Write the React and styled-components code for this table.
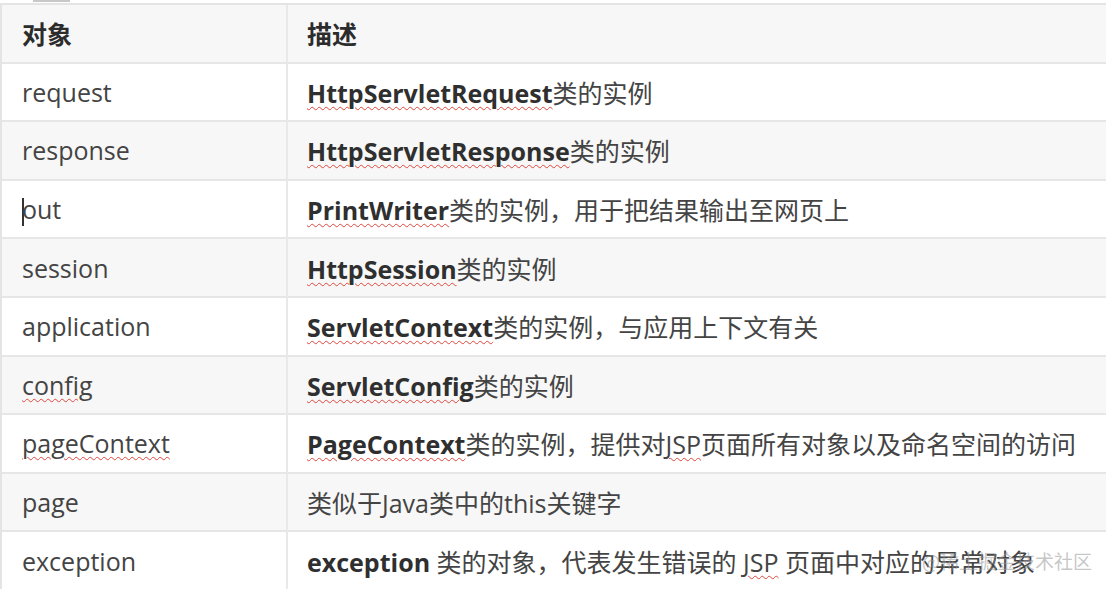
import React from "react";
import styled, { createGlobalStyle } from "styled-components";

const GlobalStyle = createGlobalStyle`
  html, body {
    margin: 0;
    padding: 0;
    background: #ffffff;
  }
  body {
    font-family: "Open Sans", "Noto Sans CJK SC", sans-serif;
    color: #3b3b3b;
  }
`;

const Page = styled.div`
  position: relative;
  width: 1106px;
  height: 589px;
  overflow: hidden;
  padding-top: 3px;
  box-sizing: border-box;
`;

const TopTab = styled.div`
  position: absolute;
  top: 0;
  left: 33px;
  width: 37px;
  height: 2px;
  background: #c8c8c8;
`;

const Table = styled.div`
  display: grid;
  grid-template-columns: 286px 1fr;
  grid-auto-rows: 58.6px;
  width: 1120px;
  border-top: 2px solid #e4e4e4;
  border-left: 2px solid #e4e4e4;
`;

const Cell = styled.div`
  display: flex;
  align-items: center;
  box-sizing: border-box;
  padding-left: ${(p) => (p.$first ? "20px" : "19px")};
  border-bottom: 2px solid #e6e6e6;
  border-right: ${(p) => (p.$first ? "2px solid #e9e9e9" : "none")};
  background: ${(p) => (p.$shade ? "#f7f7f7" : "#ffffff")};
  font-size: 25px;
  white-space: nowrap;
  font-weight: ${(p) => (p.$head ? 700 : 400)};
  color: ${(p) => (p.$head ? "#2c2c2c" : "#444444")};
`;

const Text = styled.span`
  white-space: pre;
`;

const Strong = styled.b`
  font-weight: 700;
  color: #2f2f2f;
`;

const Typo = styled.span`
  text-decoration: underline wavy #e0463c;
  text-decoration-thickness: 1px;
  text-underline-offset: 3px;
`;

const Caret = styled.span`
  display: inline-block;
  width: 1.5px;
  height: 28px;
  margin-right: -1.5px;
  background: #333;
  vertical-align: middle;
`;

const Watermark = styled.div`
  position: absolute;
  left: 922px;
  top: 547px;
  font-family: "Noto Sans CJK SC", sans-serif;
  font-size: 19px;
  color: rgba(150, 150, 150, 0.55);
  white-space: nowrap;
  pointer-events: none;
`;

const rows = [
  [
    "request",
    <><Strong><Typo>HttpServletRequest</Typo></Strong>类的实例</>,
  ],
  [
    "response",
    <><Strong><Typo>HttpServletResponse</Typo></Strong>类的实例</>,
  ],
  [
    <><Caret />out</>,
    <><Strong><Typo>PrintWriter</Typo></Strong>类的实例，用于把结果输出至网页上</>,
  ],
  [
    "session",
    <><Strong><Typo>HttpSession</Typo></Strong>类的实例</>,
  ],
  [
    "application",
    <><Strong><Typo>ServletContext</Typo></Strong>类的实例，与应用上下文有关</>,
  ],
  [
    <Typo>config</Typo>,
    <><Strong><Typo>ServletConfig</Typo></Strong>类的实例</>,
  ],
  [
    <Typo>pageContext</Typo>,
    <><Strong><Typo>PageContext</Typo></Strong>类的实例，提供对<Typo>JSP</Typo>页面所有对象以及命名空间的访问</>,
  ],
  ["page", "类似于Java类中的this关键字"],
  [
    "exception",
    <><Strong>exception</Strong>{" 类的对象，代表发生错误的 "}<Typo>JSP</Typo>{" 页面中对应的异常对象"}</>,
  ],
];

export default function App() {
  return (
    <Page>
      <GlobalStyle />
      <TopTab />
      <Table>
        <Cell $first $head $shade><Text>对象</Text></Cell>
        <Cell $head $shade><Text>描述</Text></Cell>
        {rows.map(([name, desc], i) => (
          <React.Fragment key={i}>
            <Cell $first $shade={i % 2 === 1}><Text>{name}</Text></Cell>
            <Cell $shade={i % 2 === 1}><Text>{desc}</Text></Cell>
          </React.Fragment>
        ))}
      </Table>
      <Watermark>@稀土掘金技术社区</Watermark>
    </Page>
  );
}
